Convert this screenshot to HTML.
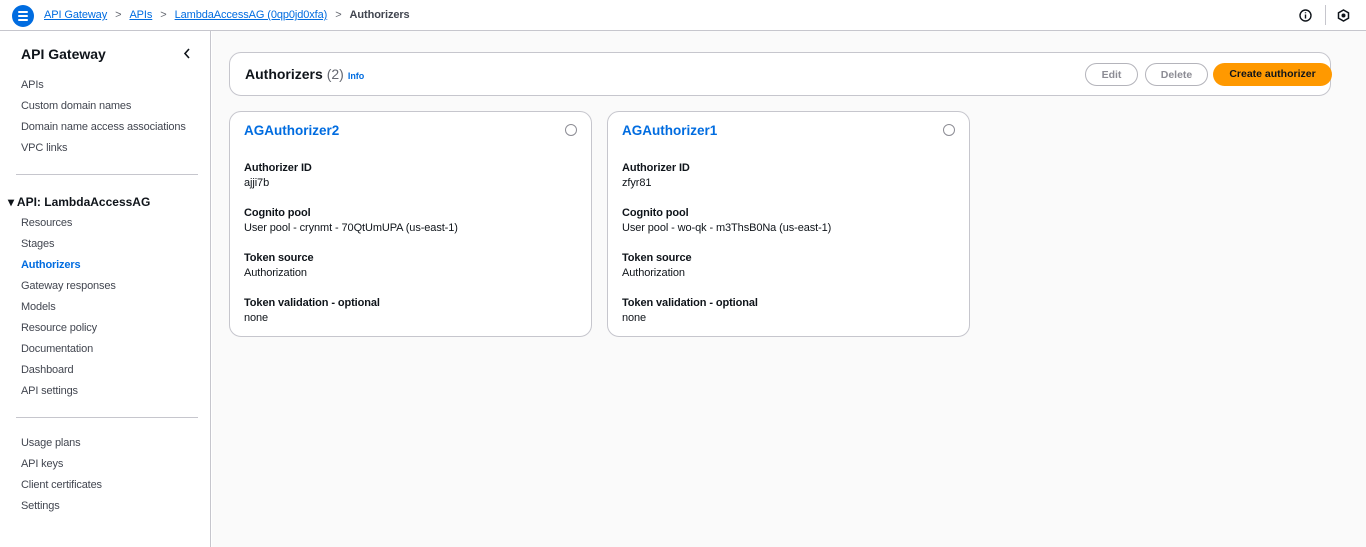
<!DOCTYPE html>
<html><head><meta charset="utf-8"><style>
*{box-sizing:border-box;margin:0;padding:0}
body{width:1366px;height:547px;overflow:hidden;font-family:"Liberation Sans",Arial,sans-serif;font-size:11px;color:#0f141a;background:#fff;position:relative}
.top{position:absolute;left:0;top:0;width:1366px;height:31px;border-bottom:1px solid #c6c6cd;background:#fff}
.ham{position:absolute;left:12px;top:5px;width:22px;height:22px;border-radius:50%;background:#006ce0}
.ham i{position:absolute;left:6px;width:10px;height:2px;background:#fff;border-radius:1px}
.bc{position:absolute;left:44px;top:9px;font-size:11px;color:#424650;letter-spacing:-0.1px}
.bc a{color:#006ce0;text-decoration:underline}
.bc .s{margin:0 8px;color:#656871}
.side{position:absolute;left:0;top:31px;width:211px;height:516px;border-right:1px solid #c6c6cd;background:#fff}
.side h2{position:absolute;left:21px;top:15px;font-size:14px;font-weight:bold}
.side .nav{position:absolute;left:21px;color:#424650;font-size:11px;letter-spacing:-0.15px}
.hr{position:absolute;left:16px;width:182px;height:1px;background:#c6c6cd}
.main{position:absolute;left:212px;top:31px;right:0;bottom:0;background:#fafafa}
.hdr{position:absolute;left:17px;top:21px;width:1102px;height:44px;border:1px solid #c6c6cd;border-radius:12px;background:#fff}
.hdr h1{position:absolute;left:15px;top:13px;font-size:14px;font-weight:bold}
.hdr h1 span{font-weight:normal;color:#656871}
.hdr .info{font-size:9px;color:#006ce0;font-weight:bold;margin-left:4px}
.btn{position:absolute;top:10px;height:23px;border-radius:12px;font-size:10.5px;font-weight:bold;text-align:center;line-height:22px}
.card{position:absolute;top:80px;width:363px;height:226px;border:1px solid #c6c6cd;border-radius:12px;background:#fff}
.card .t{position:absolute;left:14px;top:11px;font-size:13.5px;font-weight:bold;color:#006ce0}
.card .r{position:absolute;right:14px;top:12px;width:12px;height:12px;border:1px solid #8c8c94;border-radius:50%}
.card .k{position:absolute;left:14px;font-weight:bold;font-size:11px;letter-spacing:-0.1px}
.card .v{position:absolute;left:14px;font-size:11px;letter-spacing:-0.1px}
</style></head><body>
<div class="top">
<div class="ham"><i style="top:6px"></i><i style="top:10px"></i><i style="top:14px"></i></div>
<div class="bc"><a>API Gateway</a><span class="s">&gt;</span><a>APIs</a><span class="s">&gt;</span><a>LambdaAccessAG (0qp0jd0xfa)</a><span class="s">&gt;</span><b>Authorizers</b></div>
<svg style="position:absolute;left:1299px;top:9px" width="13" height="13" viewBox="0 0 13 13"><circle cx="6.5" cy="6.5" r="5.5" fill="none" stroke="#0f141a" stroke-width="1.4"/><path d="M6.5 5.5v4M6.5 3.3v1" stroke="#0f141a" stroke-width="1.4"/></svg>
<div style="position:absolute;left:1325px;top:5px;width:1px;height:20px;background:#c6c6cd"></div>
<svg style="position:absolute;left:1337px;top:9px" width="13" height="13" viewBox="0 0 13 13"><path d="M6.5 1L11.5 3.8V9.2L6.5 12L1.5 9.2V3.8Z" fill="none" stroke="#0f141a" stroke-width="1.5"/><circle cx="6.5" cy="6.5" r="2" fill="#0f141a"/></svg>
</div>
<div class="side">
<h2>API Gateway</h2>
<svg style="position:absolute;left:183px;top:17px" width="8" height="11" viewBox="0 0 8 11"><path d="M6 1L2 5.5L6 10" fill="none" stroke="#0f141a" stroke-width="1.6"/></svg>
<div class="nav" style="top:48px">APIs</div>
<div class="nav" style="top:69px">Custom domain names</div>
<div class="nav" style="top:90px">Domain name access associations</div>
<div class="nav" style="top:111px">VPC links</div>
<div class="hr" style="top:143px"></div>
<div style="position:absolute;left:8px;top:164px;font-size:12px;font-weight:bold">▾ API: LambdaAccessAG</div>
<div class="nav" style="top:186px">Resources</div>
<div class="nav" style="top:207px">Stages</div>
<div class="nav" style="top:228px;color:#006ce0;font-weight:bold">Authorizers</div>
<div class="nav" style="top:249px">Gateway responses</div>
<div class="nav" style="top:270px">Models</div>
<div class="nav" style="top:291px">Resource policy</div>
<div class="nav" style="top:312px">Documentation</div>
<div class="nav" style="top:333px">Dashboard</div>
<div class="nav" style="top:354px">API settings</div>
<div class="hr" style="top:386px"></div>
<div class="nav" style="top:406px">Usage plans</div>
<div class="nav" style="top:427px">API keys</div>
<div class="nav" style="top:448px">Client certificates</div>
<div class="nav" style="top:469px">Settings</div>
</div>
<div class="main">
<div class="hdr"><h1>Authorizers <span>(2)</span><span class="info">Info</span></h1>
<div class="btn" style="left:855px;width:53px;border:1px solid #b4b4bb;color:#8c8c94">Edit</div>
<div class="btn" style="left:915px;width:63px;border:1px solid #b4b4bb;color:#8c8c94">Delete</div>
<div class="btn" style="left:983px;width:119px;background:#ff9900;color:#0f141a;line-height:23px">Create authorizer</div>
</div>
<div class="card" style="left:17px">
<div class="t">AGAuthorizer2</div><div class="r"></div>
<div class="k" style="top:50px">Authorizer ID</div><div class="v" style="top:65px">ajji7b</div>
<div class="k" style="top:95px">Cognito pool</div><div class="v" style="top:110px">User pool - crynmt - 70QtUmUPA (us-east-1)</div>
<div class="k" style="top:140px">Token source</div><div class="v" style="top:155px">Authorization</div>
<div class="k" style="top:185px">Token validation - optional</div><div class="v" style="top:200px">none</div>
</div>
<div class="card" style="left:395px">
<div class="t">AGAuthorizer1</div><div class="r"></div>
<div class="k" style="top:50px">Authorizer ID</div><div class="v" style="top:65px">zfyr81</div>
<div class="k" style="top:95px">Cognito pool</div><div class="v" style="top:110px">User pool - wo-qk - m3ThsB0Na (us-east-1)</div>
<div class="k" style="top:140px">Token source</div><div class="v" style="top:155px">Authorization</div>
<div class="k" style="top:185px">Token validation - optional</div><div class="v" style="top:200px">none</div>
</div>
</div>
</body></html>
